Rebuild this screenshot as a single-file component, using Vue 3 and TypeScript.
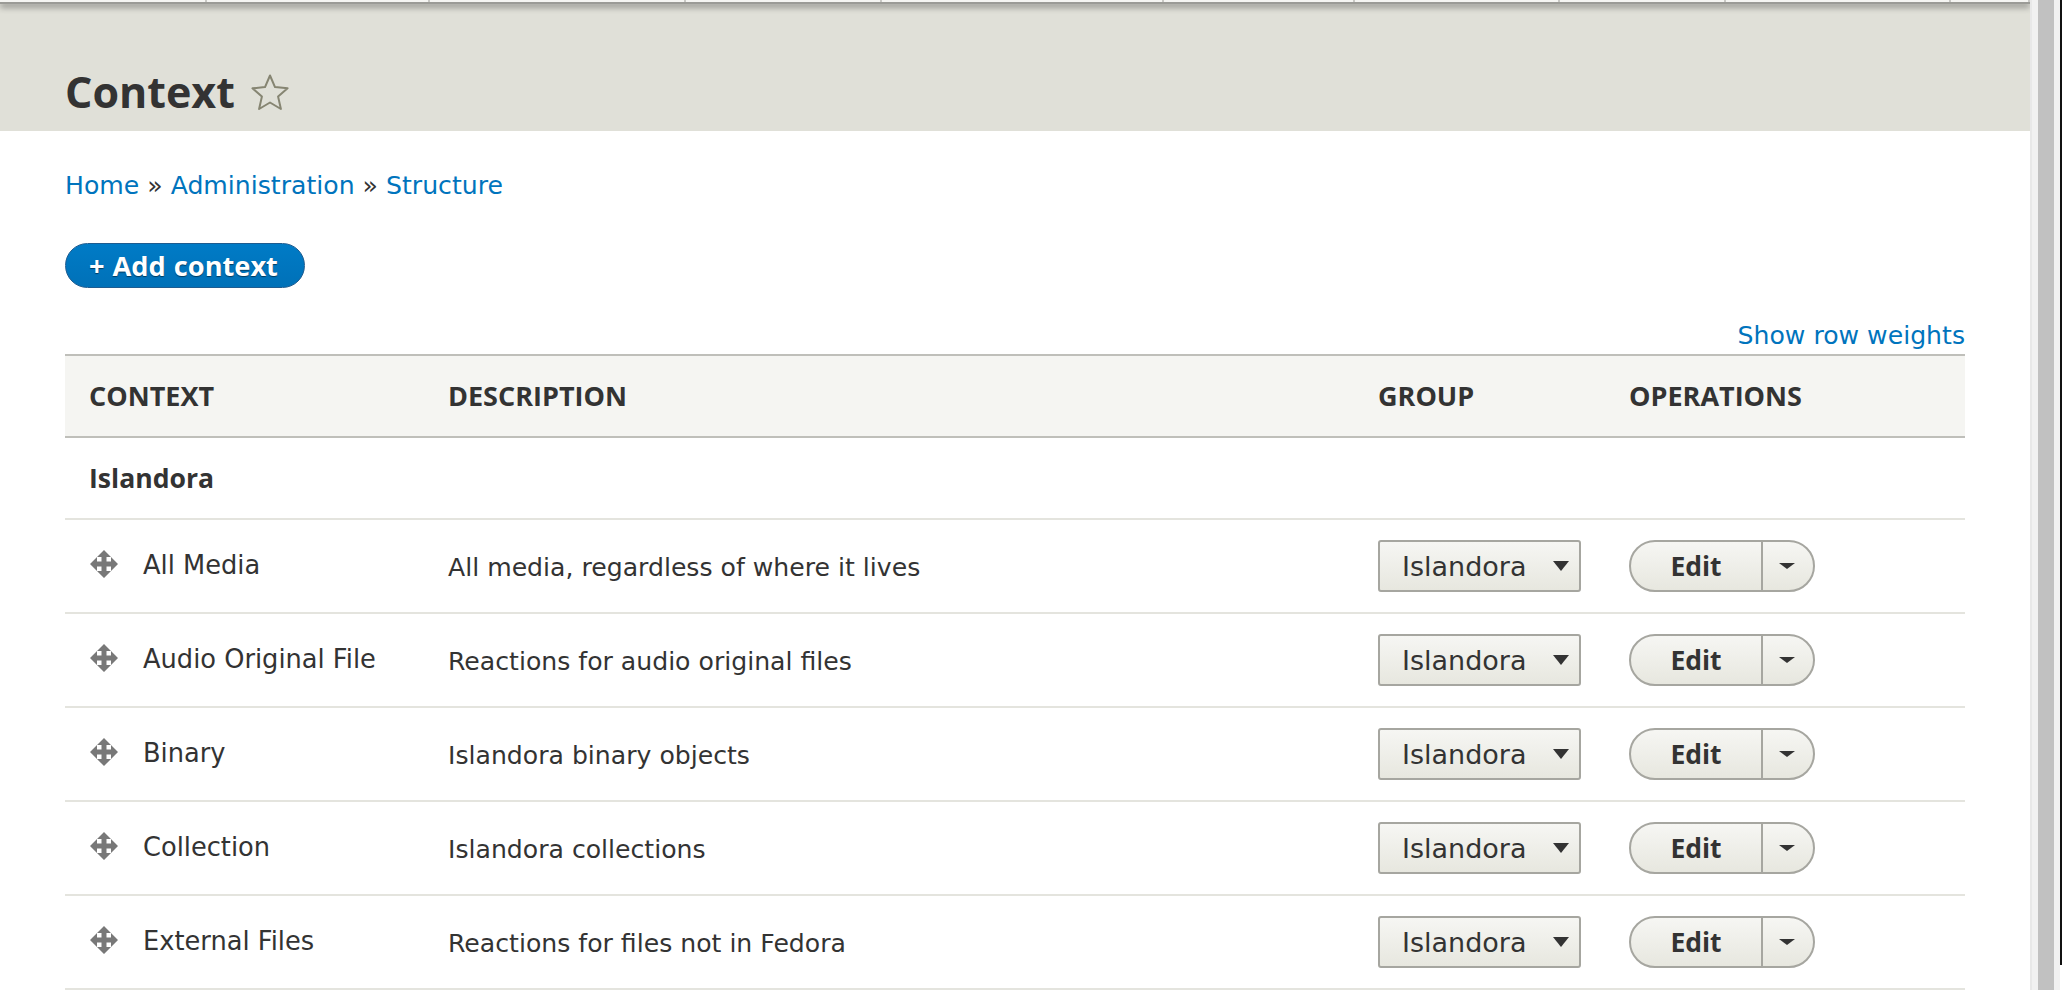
<template>
  <div class="page">
    <div class="viewport">
      <div class="toolbar">
        <span v-for="(w, i) in tabWidths" :key="i" class="tab" :style="{ width: w + 'px' }"></span>
      </div>
      <header class="head">
        <h1>Context</h1>
        <svg class="star" width="38" height="38" viewBox="0 0 38 38" fill="none">
          <path
            d="M19 1.5L24 13.1L36.6 14.3L27.1 22.6L29.9 35L19 28.5L8.1 35L10.9 22.6L1.4 14.3L14 13.1Z"
            stroke="#868572"
            stroke-width="2"
            stroke-linejoin="round"
          />
        </svg>
      </header>
      <main class="content">
        <nav class="crumbs">
          <a>Home</a><span class="sep">»</span><a>Administration</a><span class="sep">»</span><a>Structure</a>
        </nav>
        <a class="add-btn">+ Add context</a>
        <div class="weights"><a>Show row weights</a></div>
        <table class="list">
          <colgroup>
            <col style="width: 359px" />
            <col style="width: 930px" />
            <col style="width: 251px" />
            <col />
          </colgroup>
          <thead>
            <tr>
              <th>Context</th>
              <th>Description</th>
              <th>Group</th>
              <th>Operations</th>
            </tr>
          </thead>
          <tbody>
            <tr class="group-row">
              <td colspan="4">Islandora</td>
            </tr>
            <tr v-for="row in rows" :key="row.name">
              <td>
                <div class="name-cell">
                  <svg class="handle" width="28" height="28" viewBox="0 0 28 28">
                    <path
                      d="M14 0L21 7H16.5V11.5H21V7L28 14L21 21V16.5H16.5V21H21L14 28L7 21H11.5V16.5H7V21L0 14L7 7V11.5H11.5V7H7Z"
                      fill="#787878"
                    />
                  </svg>
                  <span>{{ row.name }}</span>
                </div>
              </td>
              <td class="desc">{{ row.desc }}</td>
              <td>
                <div class="fake-select">
                  <span>Islandora</span>
                  <i class="sel-arrow"></i>
                </div>
              </td>
              <td>
                <div class="dropbutton">
                  <span class="edit">Edit</span>
                  <span class="toggle"><i class="caret"></i></span>
                </div>
              </td>
            </tr>
          </tbody>
        </table>
      </main>
    </div>
    <div class="scrollbar"><div class="thumb"></div></div>
    <div class="edge"></div>
  </div>
</template>

<script setup lang="ts">
interface Row {
  name: string
  desc: string
}

const tabWidths: number[] = [207, 223, 256, 196, 282, 191, 205, 166, 225, 79]

const rows: Row[] = [
  { name: 'All Media', desc: 'All media, regardless of where it lives' },
  { name: 'Audio Original File', desc: 'Reactions for audio original files' },
  { name: 'Binary', desc: 'Islandora binary objects' },
  { name: 'Collection', desc: 'Islandora collections' },
  { name: 'External Files', desc: 'Reactions for files not in Fedora' },
]
</script>

<style>
html,
body {
  margin: 0;
  overflow: hidden;
  background: #fff;
}
</style>

<style scoped>
.page {
  display: flex;
  width: 2062px;
  height: 990px;
  overflow: hidden;
  font-family: "DejaVu Sans", sans-serif;
  color: #333;
  font-size: 25.15px;
}

.viewport {
  width: 2030px;
  flex: none;
  overflow: hidden;
}

.toolbar {
  display: flex;
  height: 2px;
  background: #f5f5f2;
  border-bottom: 2px solid #9b9b96;
  box-shadow: 0 3px 6px rgba(0, 0, 0, 0.45);
  position: relative;
  box-sizing: content-box;
}

.tab {
  flex: none;
  box-sizing: border-box;
  border-right: 2px solid #c8c8c4;
}

.head {
  display: flex;
  align-items: center;
  gap: 16px;
  height: 127px;
  padding: 0 65px;
  background: #e0e0d8;
  box-sizing: border-box;
}

.head h1 {
  margin: 48px 0 0;
  font-family: "Open Sans", sans-serif;
  font-size: 43px;
  font-weight: 700;
  line-height: 1;
}

.star {
  margin-top: 50px;
}

.content {
  padding: 0 65px;
}

.crumbs {
  display: flex;
  height: 40px;
  margin-top: 34px;
  align-items: center;
  color: #0074bd;
}

.sep {
  color: #333;
  margin: 0 8px;
}

.add-btn {
  display: block;
  box-sizing: border-box;
  width: 240px;
  height: 45px;
  margin-top: 38px;
  padding-left: 23px;
  border-radius: 23px;
  border: 1px solid #1e5c90;
  background: linear-gradient(#007bc6, #0071b8);
  color: #fff;
  font-family: "Open Sans", sans-serif;
  font-weight: 700;
  font-size: 27.2px;
  line-height: 43px;
  word-spacing: 1px;
  text-shadow: 0 1px 1px rgba(0, 0, 0, 0.5);
}

.weights {
  height: 40px;
  margin-top: 26px;
  line-height: 43px;
  text-align: right;
  color: #0074bd;
}

.list {
  width: 1900px;
  margin-top: 0;
  border-collapse: collapse;
  table-layout: fixed;
}

.list th {
  height: 82px;
  padding: 0 24px 2px;
  background: #f5f5f2;
  border-top: 2px solid #bfbfba;
  border-bottom: 2px solid #bfbfba;
  text-align: left;
  text-transform: uppercase;
  font-family: "Open Sans", sans-serif;
  font-size: 27px;
  box-sizing: border-box;
}

.list td {
  height: 94px;
  padding: 1px 24px 0;
  border-bottom: 2px solid #e4e4de;
  box-sizing: border-box;
}

.list td.desc {
  padding-top: 3px;
}

.list .group-row td {
  height: 82px;
  padding: 0 24px 1px;
  font-family: "Open Sans", sans-serif;
  font-size: 26.6px;
  font-weight: 700;
}

.name-cell {
  display: flex;
  align-items: center;
  gap: 25px;
  margin: -4px 0 0 1px;
  font-size: 25.7px;
}

.handle {
  flex: none;
  margin-top: -2px;
}

.fake-select {
  display: flex;
  align-items: center;
  justify-content: space-between;
  box-sizing: border-box;
  width: 203px;
  height: 52px;
  margin-top: -1px;
  padding: 0 10px 0 22px;
  border: 2px solid #a6a6a0;
  border-radius: 3px;
  background: linear-gradient(#f6f6f3, #e7e7df);
  font-size: 27px;
}

.sel-arrow {
  width: 0;
  height: 0;
  border-left: 8px solid transparent;
  border-right: 8px solid transparent;
  border-top: 10px solid #333;
}

.dropbutton {
  display: flex;
  box-sizing: border-box;
  width: 186px;
  height: 52px;
  margin-top: -1px;
  border: 2px solid #a6a6a0;
  border-radius: 26px;
  background: linear-gradient(#f6f6f3, #e7e7df);
}

.edit {
  width: 130px;
  line-height: 48px;
  text-align: center;
  font-family: "Open Sans", sans-serif;
  font-size: 26.5px;
  font-weight: 700;
  border-right: 2px solid #a6a6a0;
}

.toggle {
  display: flex;
  flex: 1;
  align-items: center;
  justify-content: center;
  padding-right: 3px;
}

.caret {
  width: 0;
  height: 0;
  border-left: 8px solid transparent;
  border-right: 8px solid transparent;
  border-top: 6px solid #333;
}

.scrollbar {
  flex: none;
  box-sizing: border-box;
  width: 30px;
  border-left: 2px solid #e8e8e8;
  background: #f1f1f1;
  padding: 0 6px;
}

.thumb {
  height: 100%;
  background: #c1c1c1;
}

.edge {
  flex: none;
  width: 2px;
  height: 965px;
  background: #111;
}
</style>
